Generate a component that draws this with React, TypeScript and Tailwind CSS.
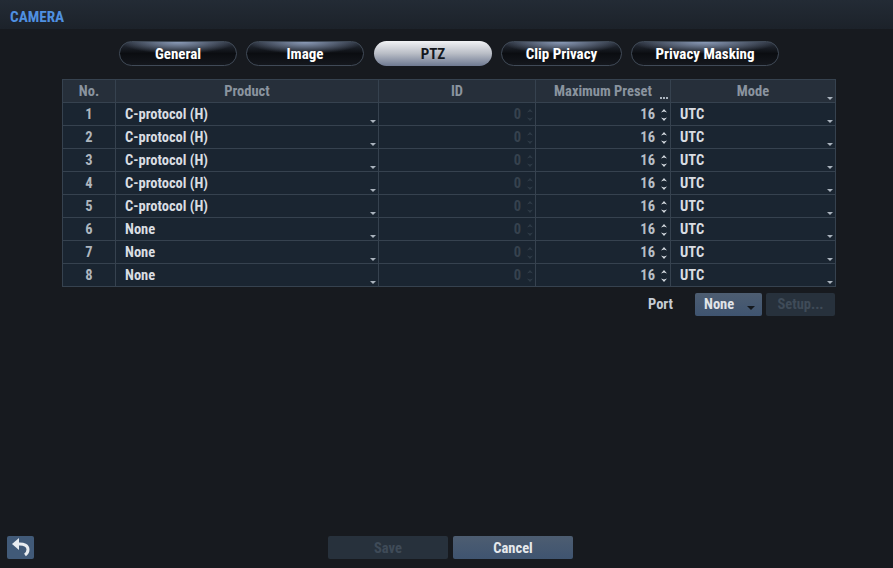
const font = { fontFamily: '"Liberation Sans Narrow","Roboto Condensed",Roboto,"Liberation Sans",sans-serif' };

const tabs = [
  { label: "General", w: "w-[118px]", m: "" },
  { label: "Image", w: "w-[118px]", m: "" },
  { label: "PTZ", w: "w-[118px]", m: "ml-[1px]", active: true },
  { label: "Clip Privacy", w: "w-[121px]", m: "" },
  { label: "Privacy Masking", w: "w-[148px]", m: "" },
];

const rows = ["C-protocol (H)", "C-protocol (H)", "C-protocol (H)", "C-protocol (H)", "C-protocol (H)", "None", "None", "None"];

function Caret() {
  return <span className="absolute right-[2px] bottom-[2px] w-0 h-0 border-l-[3px] border-r-[3px] border-t-[3px] border-l-transparent border-r-transparent border-t-[#aab3bd]" />;
}

function Spinner({ dim }: { dim?: boolean }) {
  const c = dim ? "#2f3b47" : "#d5dae0";
  return (
    <svg width="8" height="16" viewBox="0 0 8 16" className="ml-[5px] shrink-0">
      <path d="M4 2 L7 5.5 L4 4.5 L1 5.5 Z" fill={c} />
      <path d="M4 14 L7 10.5 L4 11.5 L1 10.5 Z" fill={c} />
    </svg>
  );
}

function HeaderCell({ label, caret, dots }: { label: string; caret?: boolean; dots?: boolean }) {
  return (
    <div className="relative flex items-center justify-center h-[23px] pt-[1px] bg-[#262f3a] border-r border-b border-[#36424f] text-[#8a949f]">
      {label}
      {caret && <Caret />}
      {dots && (
        <span className="absolute right-[2px] bottom-[3px] flex gap-[1px]">
          <span className="w-[2px] h-[2px] bg-[#aab3bd]" />
          <span className="w-[2px] h-[2px] bg-[#aab3bd]" />
          <span className="w-[2px] h-[2px] bg-[#aab3bd]" />
        </span>
      )}
    </div>
  );
}

const cell = "h-[23px] pt-[1px] flex items-center bg-[#1a2531] border-r border-b border-[#36424f]";

export default function App() {
  return (
    <div style={font} className="w-[893px] h-[568px] bg-[#171a1f] overflow-hidden flex flex-col text-[14.5px] font-bold">
      <div className="h-[29px] shrink-0 bg-gradient-to-b from-[#232b35] to-[#1c222a] flex items-center pl-[10px] pt-[6px] text-[#4f90e0] text-[15.2px]">CAMERA</div>

      <div className="flex gap-[9px] pl-[119px] mt-[12px] h-[25px] shrink-0 text-[15px]">
        {tabs.map((t) => (
          <div
            key={t.label}
            className={`${t.w} ${t.m} relative overflow-hidden h-[25px] pt-[2px] rounded-full flex items-center justify-center ${
              t.active
                ? "bg-gradient-to-b from-[#f2f3f5] via-[#b9bdc6] to-[#6f7a92] text-[#14181d]"
                : "bg-gradient-to-b from-[#2a313d] via-[#0b0d11] to-[#14171d] border border-[#404a57] text-white"
            }`}
          >
            {!t.active && <span className="absolute inset-x-0 top-0 h-[12px] bg-[radial-gradient(ellipse_at_50%_0%,#8a9ab6_0%,transparent_70%)]" />}
            <span className="relative">{t.label}</span>
          </div>
        ))}
      </div>

      <div className="ml-[62px] mt-[13px] w-[774px] shrink-0 grid grid-cols-[53px_263px_157px_135px_165px] border-l border-t border-[#36424f]">
        <HeaderCell label="No." />
        <HeaderCell label="Product" />
        <HeaderCell label="ID" />
        <HeaderCell label="Maximum Preset" dots />
        <HeaderCell label="Mode" caret />
        {rows.map((name, i) => (
          <div key={i} className="contents">
            <div className={`${cell} justify-center text-[#aeb6be]`}>{i + 1}</div>
            <div className={`${cell} relative pl-[9px] text-[#d9dde2]`}>
              {name}
              <Caret />
            </div>
            <div className={`${cell} justify-end pr-[1px] text-[#36424e]`}>
              0<Spinner dim />
            </div>
            <div className={`${cell} justify-end pr-[2px] text-[#b8bfc7]`}>
              16<Spinner />
            </div>
            <div className={`${cell} relative pl-[9px] text-[#d9dde2]`}>
              UTC
              <Caret />
            </div>
          </div>
        ))}
      </div>

      <div className="flex items-center h-[24px] mt-[5px] pl-[648px] shrink-0">
        <span className="w-[47px] pt-[2px] text-[#c5ccd4]">Port</span>
        <div className="relative w-[67px] h-[23px] pt-[2px] rounded-[2px] bg-gradient-to-b from-[#4d5d71] to-[#3f5470] flex items-center pl-[9px] text-[#e0e4e8]">
          None
          <span className="absolute right-[7px] bottom-[6px] w-0 h-0 border-l-[4px] border-r-[4px] border-t-[4px] border-l-transparent border-r-transparent border-t-[#14181d]" />
        </div>
        <div className="ml-[4px] w-[69px] h-[23px] pt-[2px] rounded-[2px] bg-[#27313c] flex items-center justify-center text-[#3f4b58]">Setup...</div>
      </div>

      <div className="mt-auto mb-[9px] h-[23px] shrink-0 relative flex gap-[5px] pl-[328px]">
        <div className="absolute left-[7px] top-0 w-[27px] h-[23px] rounded-[2px] bg-[#415a78] flex items-center justify-center">
          <svg width="27" height="23" viewBox="0 0 27 23">
            <path d="M5 8 L12 2 L12 14 Z" fill="#e8ecf0" />
            <path d="M11 8 C17 7.5 21 9.5 21 13.5 C21 16 20 17.5 18 19" fill="none" stroke="#e8ecf0" strokeWidth="3" />
          </svg>
        </div>
        <div className="w-[120px] h-[23px] pt-[2px] rounded-[2px] bg-[#27313c] flex items-center justify-center text-[#3f4b58]">Save</div>
        <div className="w-[120px] h-[23px] pt-[2px] rounded-[2px] bg-gradient-to-b from-[#4d5d71] to-[#3f5470] flex items-center justify-center text-[#e6e9ec]">Cancel</div>
      </div>
    </div>
  );
}
